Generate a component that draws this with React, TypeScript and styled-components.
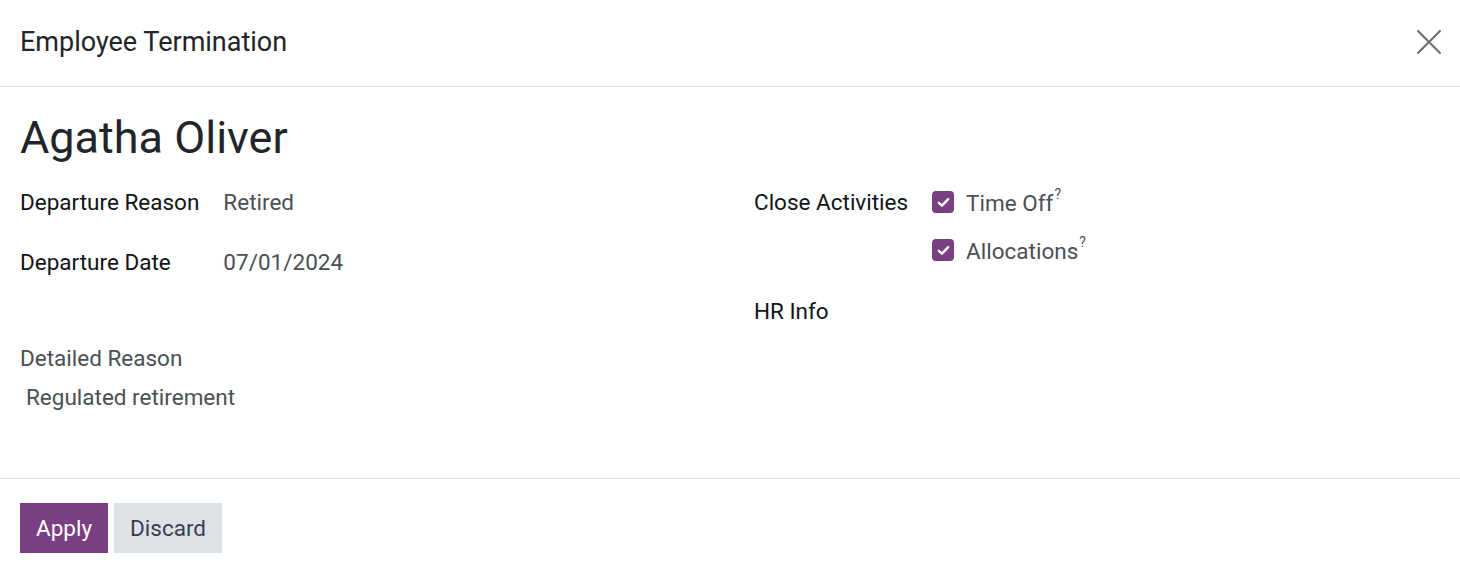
import React from "react";
import styled, { createGlobalStyle } from "styled-components";

const GlobalStyle = createGlobalStyle`
  html, body {
    margin: 0;
    padding: 0;
    background: #ffffff;
    font-family: Roboto, "Noto Sans", sans-serif;
    color: #212529;
  }
`;

const Dialog = styled.div`
  width: 1460px;
  height: 573px;
  display: flex;
  flex-direction: column;
  background: #fff;
`;

const Header = styled.header`
  height: 87px;
  box-sizing: border-box;
  border-bottom: 1px solid #dee2e6;
  display: flex;
  align-items: center;
  justify-content: space-between;
  padding: 0 18px 2px 20px;
`;

const Title = styled.h4`
  margin: 0;
  font-size: 27px;
  font-weight: 400;
  color: #212529;
`;

const CloseButton = styled.button`
  background: none;
  border: none;
  padding: 0;
  width: 26px;
  height: 26px;
  cursor: pointer;
  display: flex;
  align-items: center;
  justify-content: center;
`;

const Body = styled.main`
  flex: 1;
  padding: 24px 20px 0 20px;
  box-sizing: border-box;
  border-bottom: 1px solid #dee2e6;
`;

const Name = styled.h1`
  margin: 0 0 10px 0;
  font-size: 45px;
  font-weight: 400;
  line-height: 1.2;
  color: #212529;
`;

const Columns = styled.div`
  display: grid;
  grid-template-columns: 1fr 1fr;
  column-gap: 48px;
`;

const Group = styled.div<{ $offset?: number }>`
  display: grid;
  grid-template-columns: max-content 1fr;
  column-gap: 24px;
  align-content: start;
  padding-top: ${(p) => p.$offset ?? 0}px;
`;

const Label = styled.div<{ $h: number }>`
  height: ${(p) => p.$h}px;
  display: flex;
  align-items: center;
  font-size: 22.5px;
  font-weight: 400;
  color: #111418;
`;

const Value = styled.div<{ $h: number }>`
  height: ${(p) => p.$h}px;
  display: flex;
  flex-direction: column;
  justify-content: center;
  font-size: 22.5px;
  color: #4a4f55;
`;

const CheckRow = styled.label`
  display: flex;
  align-items: center;
  gap: 12px;
  height: 48px;
  font-size: 22.5px;
  color: #4a4f55;
`;

const Box = styled.span`
  width: 22px;
  height: 22px;
  border-radius: 4px;
  background: #7a3f82;
  display: flex;
  align-items: center;
  justify-content: center;
`;

const Help = styled.sup`
  font-size: 14px;
  margin-left: 1px;
  position: relative;
  top: -3px;
`;

const GroupTitle = styled.div`
  grid-column: 1 / -1;
  height: 62px;
  display: flex;
  align-items: center;
  font-size: 22.5px;
  color: #111418;
  margin-top: 6px;
`;

const FullField = styled.div`
  margin-top: 47px;
`;

const FieldLabel = styled.div`
  font-size: 22.5px;
  color: #4a4f55;
  height: 32px;
  display: flex;
  align-items: center;
`;

const FieldValue = styled.div`
  font-size: 22.5px;
  color: #4a4f55;
  padding-left: 6px;
  height: 46px;
  display: flex;
  align-items: center;
`;

const Footer = styled.footer`
  height: 94px;
  box-sizing: border-box;
  display: flex;
  align-items: flex-start;
  gap: 6px;
  padding: 24px 20px 0 20px;
`;

const Btn = styled.button<{ $primary?: boolean }>`
  height: 50px;
  padding: 0 16px;
  border: none;
  border-radius: 0;
  font-family: Roboto, "Noto Sans", sans-serif;
  font-size: 22.5px;
  cursor: pointer;
  background: ${(p) => (p.$primary ? "#7a3f82" : "#dee2e6")};
  color: ${(p) => (p.$primary ? "#ffffff" : "#374151")};
`;

const Check = () => (
  <Box>
    <svg width="13" height="11" viewBox="0 0 13 11">
      <path d="M1.8 5.8 L5 8.6 L11.2 2.2" stroke="#fff" strokeWidth="2.4" fill="none" strokeLinecap="round" strokeLinejoin="round" />
    </svg>
  </Box>
);

export default function App() {
  return (
    <Dialog>
      <GlobalStyle />
      <Header>
        <Title>Employee Termination</Title>
        <CloseButton aria-label="Close">
          <svg width="24" height="24" viewBox="0 0 24 24">
            <path d="M1 1 L23 23 M23 1 L1 23" stroke="#6c6c6c" strokeWidth="2" strokeLinecap="round" />
          </svg>
        </CloseButton>
      </Header>
      <Body>
        <Name>Agatha Oliver</Name>
        <Columns>
          <div>
            <Group>
              <Label $h={54}>Departure Reason</Label>
              <Value $h={54}>Retired</Value>
              <Label $h={66}>Departure Date</Label>
              <Value $h={66}>07/01/2024</Value>
            </Group>
            <FullField>
              <FieldLabel>Detailed Reason</FieldLabel>
              <FieldValue>Regulated retirement</FieldValue>
            </FullField>
          </div>
          <Group $offset={3}>
            <Label $h={48}>Close Activities</Label>
            <div>
              <CheckRow>
                <Check />
                <span>
                  Time Off<Help>?</Help>
                </span>
              </CheckRow>
              <CheckRow>
                <Check />
                <span>
                  Allocations<Help>?</Help>
                </span>
              </CheckRow>
            </div>
            <GroupTitle>HR Info</GroupTitle>
          </Group>
        </Columns>
      </Body>
      <Footer>
        <Btn $primary>Apply</Btn>
        <Btn>Discard</Btn>
      </Footer>
    </Dialog>
  );
}
